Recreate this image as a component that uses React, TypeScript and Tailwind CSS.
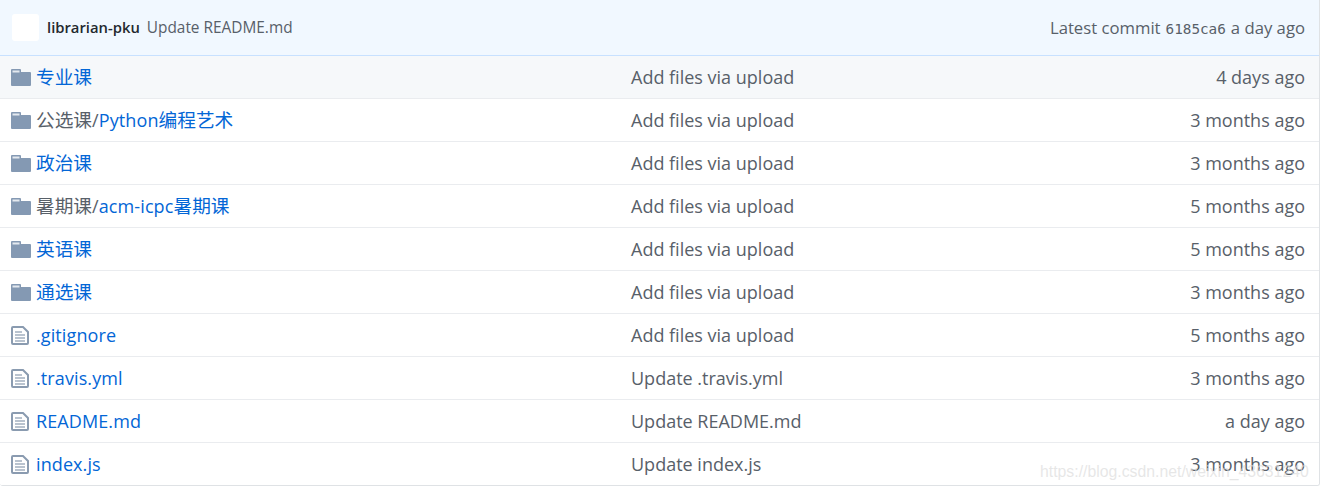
import React from 'react';

type Part = { text: string; muted?: boolean };

interface Row {
  kind: 'dir' | 'file';
  name: Part[];
  message: string;
  age: string;
}

const rows: Row[] = [
  { kind: 'dir', name: [{ text: '专业课' }], message: 'Add files via upload', age: '4 days ago' },
  { kind: 'dir', name: [{ text: '公选课/', muted: true }, { text: 'Python编程艺术' }], message: 'Add files via upload', age: '3 months ago' },
  { kind: 'dir', name: [{ text: '政治课' }], message: 'Add files via upload', age: '3 months ago' },
  { kind: 'dir', name: [{ text: '暑期课/', muted: true }, { text: 'acm-icpc暑期课' }], message: 'Add files via upload', age: '5 months ago' },
  { kind: 'dir', name: [{ text: '英语课' }], message: 'Add files via upload', age: '5 months ago' },
  { kind: 'dir', name: [{ text: '通选课' }], message: 'Add files via upload', age: '3 months ago' },
  { kind: 'file', name: [{ text: '.gitignore' }], message: 'Add files via upload', age: '5 months ago' },
  { kind: 'file', name: [{ text: '.travis.yml' }], message: 'Update .travis.yml', age: '3 months ago' },
  { kind: 'file', name: [{ text: 'README.md' }], message: 'Update README.md', age: 'a day ago' },
  { kind: 'file', name: [{ text: 'index.js' }], message: 'Update index.js', age: '3 months ago' },
];

const FolderIcon = () => (
  <svg width="20" height="17" viewBox="0 0 20 17" className="mt-px shrink-0">
    <path d="M0 1 a1 1 0 0 1 1-1 h8 a1 1 0 0 1 1 1 v2 h9 a1 1 0 0 1 1 1 v12 a1 1 0 0 1-1 1 H1 a1 1 0 0 1-1-1 Z" fill="#8499b3" />
    <rect x="1.5" y="1.5" width="7" height="2" fill="#e4e9ef" />
  </svg>
);

const FileIcon = () => (
  <svg width="18" height="19" viewBox="0 0 18 19" className="shrink-0" fill="none">
    <path d="M1 2 a1 1 0 0 1 1-1 h10 l5 5 v11 a1 1 0 0 1-1 1 H2 a1 1 0 0 1-1-1 Z" stroke="#8a9bb0" strokeWidth="2" fill="#fff" />
    <path d="M4 6 h7 M4 9 h10 M4 12 h10 M4 15 h10" stroke="#a3b0c0" strokeWidth="1.4" />
  </svg>
);

// CJK glyphs sit a little wider than the latin text next to them
const NameText = ({ text }: { text: string }) => (
  <>
    {text.split(/([\u4e00-\u9fff]+)/).filter(Boolean).map((chunk, i) =>
      /[\u4e00-\u9fff]/.test(chunk) ? (
        <span key={i} className="text-[18.7px]">{chunk}</span>
      ) : (
        <span key={i} className="tracking-[0.1px]">{chunk}</span>
      ),
    )}
  </>
);

export default function App() {
  return (
    <div className="relative h-[488px] w-[1321px] overflow-hidden bg-white font-['Open_Sans','Noto_Sans_CJK_SC',sans-serif] text-[18px] text-[#586069]">
      <div className="h-[486px] w-[1320px] overflow-hidden rounded-b-[3px] border-r border-b border-[#dfe2e5]">
        <div className="flex h-[56px] items-center border-b border-[#c8e1ff] bg-[#f1f8ff] pl-3 pr-[14px]">
          <div className="h-[27px] w-[27px] rounded-[3px] bg-white" />
          <span className="ml-2 text-[14.8px] font-semibold text-[#24292e]">librarian-pku</span>
          <span className="ml-[7px] text-[15.4px] text-[#586069]">Update README.md</span>
          <span className="ml-auto flex items-baseline gap-[5px] text-[16.7px]">
            Latest commit
            <span className="font-['DejaVu_Sans_Mono',monospace] text-[14.3px]">6185ca6</span>
            a day ago
          </span>
        </div>
        {rows.map((row, i) => (
          <div
            key={i}
            className={`flex h-[43px] items-center border-b border-[#eaecef] pr-[14px] ${i === 0 ? 'bg-[#f6f8fa]' : 'bg-white'}`}
          >
            <div className="flex w-[631px] items-center pl-[11px]">
              <div className="flex w-[25px]">{row.kind === 'dir' ? <FolderIcon /> : <FileIcon />}</div>
              <span className="text-[#0366d6]">
                {row.name.map((part, j) => (
                  <span key={j} className={part.muted ? 'text-[#586069]' : ''}>
                    <NameText text={part.text} />
                  </span>
                ))}
              </span>
            </div>
            <div className="flex-1">{row.message}</div>
            <div className="text-right">{row.age}</div>
          </div>
        ))}
      </div>
      <div className="absolute left-[1040px] top-[460px] font-['Liberation_Sans',sans-serif] text-[15.8px] whitespace-nowrap text-[#dcdcdc]/70">
        https://blog.csdn.net/weixin_43631240
      </div>
    </div>
  );
}
